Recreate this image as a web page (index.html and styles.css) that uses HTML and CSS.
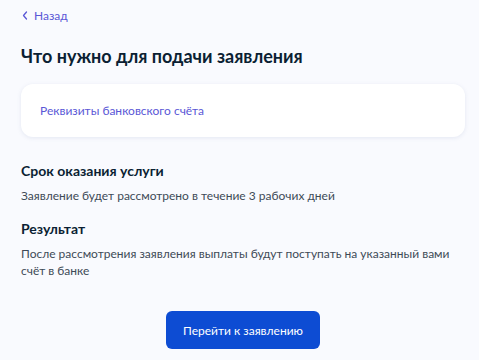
FILE: index.html
```html
<!DOCTYPE html>
<html lang="ru">
<head>
<meta charset="utf-8">
<link rel="stylesheet" href="styles.css">
</head>
<body>
<div class="page">
  <a class="back" href="#">
    <svg class="chev" width="6" height="9" viewBox="0 0 6 9"><path d="M4.5 1 L1.5 4.5 L4.5 8" fill="none" stroke="currentColor" stroke-width="1.3" stroke-linecap="round" stroke-linejoin="round"/></svg>
    <span>Назад</span>
  </a>
  <h1 class="title">Что нужно для подачи заявления</h1>
  <div class="card">
    <a class="card-link" href="#">Реквизиты банковского счёта</a>
  </div>
  <section class="block">
    <h2 class="subtitle">Срок оказания услуги</h2>
    <p class="text">Заявление будет рассмотрено в течение 3 рабочих дней</p>
  </section>
  <section class="block">
    <h2 class="subtitle">Результат</h2>
    <p class="text">После рассмотрения заявления выплаты будут поступать на указанный вами счёт в банке</p>
  </section>
  <div class="actions">
    <button class="btn">Перейти к заявлению</button>
  </div>
</div>
</body>
</html>
```

FILE: styles.css
```css
html, body {
  margin: 0;
  padding: 0;
  background: #f9fafe;
}
body {
  font-family: Lato, "Noto Sans", sans-serif;
  color: #0b1f33;
}
.page {
  padding: 7px 14px 0 21px;
  display: flex;
  flex-direction: column;
}
.back {
  display: flex;
  align-items: center;
  gap: 6px;
  color: #5a57d6;
  text-decoration: none;
  font-size: 12px;
  height: 16px;
  margin-left: 1px;
}
.chev { display: block; }
.title {
  margin: 21px 0 0;
  font-size: 18px;
  font-weight: 700;
  line-height: 24px;
  color: #0b1f33;
}
.card {
  margin-top: 16px;
  background: #ffffff;
  border-radius: 12px;
  box-shadow: 0 1px 4px rgba(105, 125, 175, 0.15);
  padding: 18px 19px;
  height: 17px;
  display: flex;
  align-items: center;
}
.card-link {
  color: #5a57d6;
  text-decoration: none;
  font-size: 12px;
}
.block:first-of-type { margin-top: 24px; }
.subtitle {
  margin: 0;
  font-size: 14px;
  font-weight: 700;
  line-height: 20px;
}
.text {
  margin: 6px 0 0;
  font-size: 12px;
  line-height: 17px;
  color: #3e4a57;
}
.block + .block { margin-top: 15px; }
.actions {
  display: flex;
  justify-content: center;
  margin-top: 32px;
}
.btn {
  background: #0d4cd3;
  color: #ffffff;
  border: none;
  border-radius: 6px;
  font-family: Lato, "Noto Sans", sans-serif;
  font-size: 12px;
  width: 154px;
  height: 38px;
  cursor: pointer;
}
```
